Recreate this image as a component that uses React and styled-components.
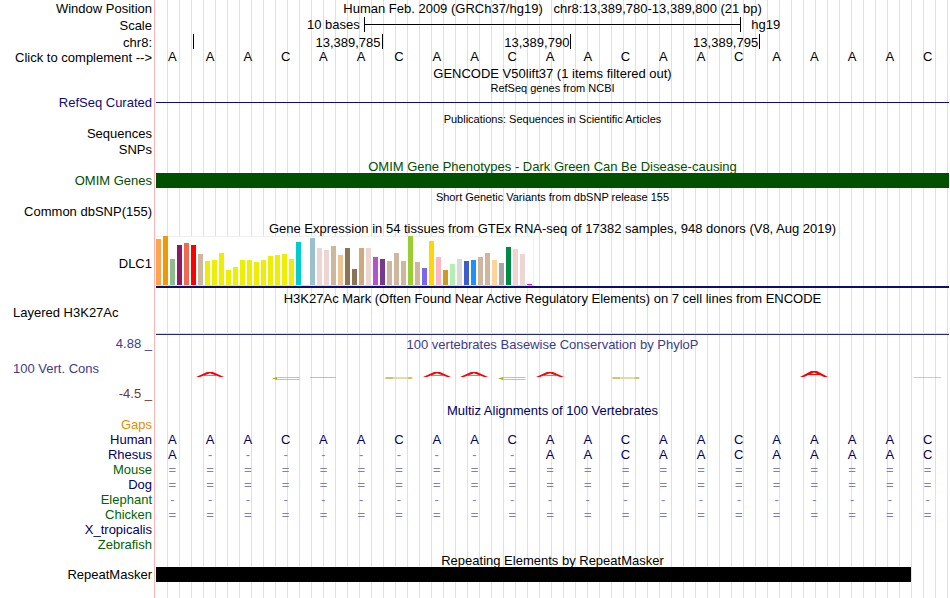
import React from 'react'
import styled, { createGlobalStyle } from 'styled-components'

const GlobalStyle = createGlobalStyle`
	body {
		margin: 0;
		background: #ffffff;
		color: #000000;
		font-family: "Liberation Sans", Arial, Helvetica, sans-serif;
		font-size: 13px;
		line-height: 15px;
	}
`

// Colours
const navy = '#000064'
const refseqBlue = '#0c0c78'
const omimGreen = '#005000'
const consBlue = '#3c3c8c'
const consRed = '#783232'
const speciesGreen = '#006400'
const gapsOrange = '#e68c00'

// The pink rule parts the labels from the data, the blue guides repeat behind the data
const Browser = styled.main`
	min-height: 100vh;
	overflow: hidden;
	background:
		linear-gradient(#ffb4b4, #ffb4b4) 154px 0 / 1px 100% no-repeat,
		repeating-linear-gradient(to right, transparent 0 11px, #dcdcff 11px 12px) 156px 0 /
			calc(100% - 157px) 100% no-repeat;
`

const Row = styled.div`
	display: grid;
	grid-template-columns: 152px 1fr;
	column-gap: 4px;
	align-items: ${(props) => props.$align || 'start'};
	min-height: ${(props) => props.$height || 15}px;
	margin-top: ${(props) => props.$gap || 0}px;
	padding-right: 1px;
`

const Label = styled.div`
	text-align: ${(props) => (props.$left ? 'left' : 'right')};
	padding-left: 13px;
	white-space: pre;
	align-self: ${(props) => props.$align || 'auto'};
	color: ${(props) => props.$color || 'inherit'};
`

const LabelButton = styled.button`
	border: none;
	padding: 0;
	background: none;
	color: inherit;
	font: inherit;
	text-align: right;
	white-space: nowrap;
	cursor: pointer;
`

const LabelColumn = styled.div`
	display: flex;
	flex-direction: column;
	gap: 10px;
	padding-top: 1px;
`

const Title = styled.h2`
	margin: ${(props) => props.$gap || 0}px 1px 0 156px;
	font-size: ${(props) => (props.$small ? 11 : 13)}px;
	font-weight: normal;
	line-height: 13px;
	text-align: center;
	white-space: pre;
	color: ${(props) => props.$color || 'inherit'};
`

const Heading = styled(Title)`
	margin: ${(props) => props.$gap || 0}px 0 0;
`

const Scale = styled.div`
	display: grid;
	grid-template-columns: 11fr 20fr 11fr;
`

const ScaleText = styled.span`
	text-align: ${(props) => props.$align};
	padding: 0 ${(props) => (props.$align === 'right' ? 4 : 10)}px;
`

const ScaleBar = styled.div`
	display: flex;
	align-items: center;
	border: solid #000000;
	border-width: 0 1px;

	&::before {
		content: '';
		flex: 1;
		height: 1px;
		background: #000000;
	}
`

const Ruler = styled.div`
	display: grid;
	grid-template-columns: 1fr repeat(4, 5fr);
`

const Tick = styled.span`
	height: 15px;
	line-height: 17px;
	padding-right: 1px;
	text-align: right;
	border-right: ${(props) => (props.$open ? 'none' : '1px solid #000000')};
`

const Bases = styled.div`
	display: grid;
	grid-template-columns: repeat(21, 1fr);
	line-height: ${(props) => props.$line || 15}px;
	color: ${(props) => props.$color || 'inherit'};
`

const Base = styled.span`
	display: flex;
	justify-content: center;
	padding-right: 5px;
	color: ${(props) => (props.$faint ? '#8080b4' : 'inherit')};
`

const Rule = styled.div`
	height: ${(props) => props.$height || 1}px;
	background: ${(props) => props.$color};
`

const FeatureGrid = styled.div`
	display: grid;
	grid-template-columns: repeat(21, 1fr);
`

const Feature = styled.div`
	height: 15px;
	grid-column: 1 / span ${(props) => props.$span};
	background: ${(props) => props.$color};
`

const Expression = styled.svg`
	display: block;
`

const SignalBase = styled.div`
	align-self: end;
	height: 1px;
	border-top: 1px solid #ffd28c;
	background: #28287a;
`

const Logos = styled(Bases)`
	margin-top: 20px;
`

const Logo = styled.svg`
	display: block;
	flex: none;
`

const sequence = 'AAACAACAACAACAACAAAAC'

// GTEx tissues, [colour, bar height]
const tissues = [
	['#ffa54f', 46], ['#ee9a00', 49], ['#8fbc8f', 26], ['#8b1c62', 40],
	['#ee6a50', 42], ['#ff0000', 40], ['#cdb79e', 31], ['#eeee00', 24],
	['#eeee00', 25], ['#eeee00', 32], ['#eeee00', 15], ['#eeee00', 18],
	['#eeee00', 25], ['#eeee00', 25], ['#eeee00', 23], ['#eeee00', 25],
	['#eeee00', 29], ['#eeee00', 30], ['#eeee00', 31], ['#eeee00', 26],
	['#00cdcd', 43], ['#ee82ee', 0], ['#9ac0cd', 47], ['#eed5d2', 37],
	['#eed5d2', 35], ['#cdb79e', 39], ['#eec591', 30], ['#8b7355', 37],
	['#8b7355', 16], ['#cdaa7d', 37], ['#eed5d2', 37], ['#b452cd', 28],
	['#7a378b', 26], ['#cdb79e', 24], ['#cdb79e', 32], ['#cdb79e', 24],
	['#9acd32', 49], ['#cdb79e', 23], ['#7a67ee', 17], ['#ffd700', 44],
	['#ffb6c1', 28], ['#cd9b1d', 15], ['#b4eeb4', 21], ['#d9d9d9', 26],
	['#3a5fcd', 24], ['#1e90ff', 25], ['#cdb79e', 28], ['#cdb79e', 32],
	['#ffd39b', 25], ['#a6a6a6', 22], ['#008b45', 38], ['#eed5d2', 36],
	['#eed5d2', 31], ['#ff00ff', 1],
]

// Conservation marks by base index
const marks = {
	1: 'peak',
	3: 'open',
	4: 'flatRed',
	6: 'thin',
	7: 'peak',
	8: 'peak',
	9: 'open',
	10: 'peak',
	12: 'thin',
	17: 'high',
	20: 'flatGreen',
}

const species = [
	{ name: 'Gaps', color: gapsOrange, bases: '' },
	{ name: 'Human', color: navy, bases: sequence },
	{ name: 'Rhesus', color: navy, bases: 'A---------AACAACAAAAC' },
	{ name: 'Mouse', color: speciesGreen, bases: '='.repeat(21) },
	{ name: 'Dog', color: navy, bases: '='.repeat(21) },
	{ name: 'Elephant', color: speciesGreen, bases: '-'.repeat(21) },
	{ name: 'Chicken', color: speciesGreen, bases: '='.repeat(21) },
	{ name: 'X_tropicalis', color: navy, bases: '' },
	{ name: 'Zebrafish', color: speciesGreen, bases: '' },
]

const BaseRow = ({ bases, color, line }) => (
	<Bases $color={color} $line={line}>
		{bases.split('').map((base, i) => (
			<Base key={i} $faint={base === '-' || base === '='}>
				{base}
			</Base>
		))}
	</Bases>
)

const ExpressionChart = () => (
	<Expression width="378" height="50" role="img" aria-label="DLC1 expression by tissue">
		<rect x="0" y="0" width="378" height="50" fill="#f0f0f0" />
		<rect x="0" y="1" width="377" height="48" fill="#ffffff" />
		<rect x="0" y="49" width="378" height="1" fill="#dcdcdc" />
		{tissues.map(([color, height], i) => (
			<rect key={i} x={i * 7} y={49 - height} width="5" height={height} fill={color} />
		))}
	</Expression>
)

const Mark = ({ kind }) => (
	<Logo width="28" height="10" viewBox="0 0 28 10" fill="none">
		{kind === 'peak' && (
			<g fill="#ff0000">
				<path d="M0 6L11 1H17L28 6H24L14 2.200L4 6Z" />
				<path d="M8 4H20V4.600H8Z" />
			</g>
		)}
		{kind === 'high' && (
			<g fill="#ff0000">
				<path d="M0 6L11 0H17L28 6H24L14 1.400L4 6Z" />
				<path d="M8 3H20V4H8Z" />
			</g>
		)}
		{kind === 'open' && (
			<g>
				<path d="M27.500 6.500H6L2 7.500L6 8.500H27.500" stroke="#b4b432" strokeWidth="0.7" />
				<path d="M0 7.500L5 6.200V8.800Z" fill="#aaaa00" />
			</g>
		)}
		{kind === 'thin' && (
			<g>
				<path d="M0 7H27.500" stroke="#d2d282" strokeWidth="1.4" />
				<path d="M1 7H8M23 7H27" stroke="#b4b432" strokeWidth="1" />
			</g>
		)}
		{kind === 'flatRed' && <path d="M1 6.500H27" stroke="#ff8c8c" strokeWidth="0.8" />}
		{kind === 'flatGreen' && <path d="M0 6.500H27" stroke="#bebe5a" strokeWidth="0.7" />}
	</Logo>
)

const App = () => {
	return (
		<>
			<GlobalStyle />
			<Browser>
				<Row $height={16} $align="center">
					<Label $align="end">Window Position</Label>
					<Heading as="h1">
						{'Human Feb. 2009 (GRCh37/hg19)   chr8:13,389,780-13,389,800 (21 bp)'}
					</Heading>
				</Row>
				<Row $height={16} $gap={1}>
					<Label $align="end">Scale</Label>
					<Scale>
						<ScaleText $align="right">10 bases</ScaleText>
						<ScaleBar />
						<ScaleText $align="left">hg19</ScaleText>
					</Scale>
				</Row>
				<Row $height={16} $gap={1}>
					<Label $align="end">chr8:</Label>
					<Ruler>
						<Tick />
						<Tick>13,389,785</Tick>
						<Tick>13,389,790</Tick>
						<Tick>13,389,795</Tick>
						<Tick $open />
					</Ruler>
				</Row>
				<Row>
					<Label>
						<LabelButton type="button">Click to complement --&gt;</LabelButton>
					</Label>
					<BaseRow bases={sequence} line={13} />
				</Row>

				<Title $gap={2}>GENCODE V50lift37 (1 items filtered out)</Title>
				<Title $gap={2} $small>RefSeq genes from NCBI</Title>
				<Row $align="center">
					<Label $color={refseqBlue}>RefSeq Curated</Label>
					<Rule $color={refseqBlue} />
				</Row>

				<Title $gap={3} $small>Publications: Sequences in Scientific Articles</Title>
				<Row>
					<Label>Sequences</Label>
				</Row>
				<Row $gap={1}>
					<Label>SNPs</Label>
				</Row>

				<Title $gap={3} $color={omimGreen}>
					OMIM Gene Phenotypes - Dark Green Can Be Disease-causing
				</Title>
				<Row>
					<Label $color={omimGreen}>OMIM Genes</Label>
					<FeatureGrid>
						<Feature $span={21} $color={omimGreen} />
					</FeatureGrid>
				</Row>

				<Title $gap={3} $small>Short Genetic Variants from dbSNP release 155</Title>
				<Row>
					<Label>Common dbSNP(155)</Label>
				</Row>

				<Title $gap={3}>
					Gene Expression in 54 tissues from GTEx RNA-seq of 17382 samples, 948 donors (V8, Aug 2019)
				</Title>
				<Row $gap={1} $height={54}>
					<Label $align="center">DLC1</Label>
					<div>
						<ExpressionChart />
						<Rule $height={2} $color={refseqBlue} />
					</div>
				</Row>

				<Title $gap={2}>
					H3K27Ac Mark (Often Found Near Active Regulatory Elements) on 7 cell lines from ENCODE
				</Title>
				<Row $height={30}>
					<Label $left>Layered H3K27Ac</Label>
					<SignalBase />
				</Row>

				<Row $height={67}>
					<LabelColumn>
						<Label $color={consBlue}>4.88 _</Label>
						<Label $left $color={consBlue}>100 Vert. Cons</Label>
						<Label $color={consRed}>-4.5 _</Label>
					</LabelColumn>
					<div>
						<Heading $gap={3} $color={consBlue}>
							100 vertebrates Basewise Conservation by PhyloP
						</Heading>
						<Logos>
							{sequence.split('').map((base, i) => (
								<Base key={i}>
									<Mark kind={marks[i]} />
								</Base>
							))}
						</Logos>
					</div>
				</Row>

				<Title $gap={2} $color={navy}>Multiz Alignments of 100 Vertebrates</Title>
				{species.map((item) => (
					<Row key={item.name}>
						<Label $color={item.color}>{item.name}</Label>
						<BaseRow bases={item.bases} color={navy} />
					</Row>
				))}

				<Title $gap={2}>Repeating Elements by RepeatMasker</Title>
				<Row>
					<Label>RepeatMasker</Label>
					<FeatureGrid>
						<Feature $span={20} $color="#000000" />
					</FeatureGrid>
				</Row>
			</Browser>
		</>
	)
}

export default App
